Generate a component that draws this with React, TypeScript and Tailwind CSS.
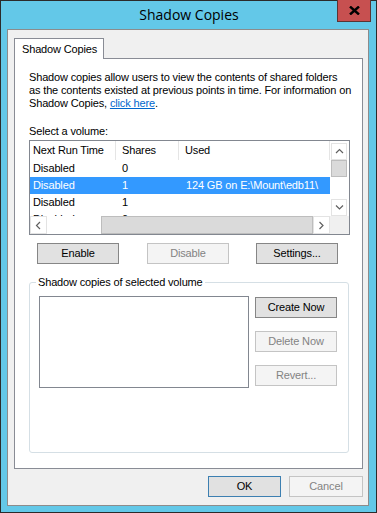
import React from "react";

const btnBase = "h-[21px] border flex items-center justify-center leading-none text-[11px]";
const btnNormal = `${btnBase} bg-[#e1e1e1] border-[#868686] text-black`;
const btnDisabled = `${btnBase} bg-[#f4f4f4] border-[#c4c4c4] text-[#838383]`;

const rows = [
  { time: "Disabled", shares: "0", used: "" },
  { time: "Disabled", shares: "1", used: "124 GB on E:\\Mount\\edb11\\", selected: true },
  { time: "Disabled", shares: "1", used: "" },
  { time: "Disabled", shares: "0", used: "" },
];

const Chevron = ({ dir }: { dir: "up" | "down" | "left" | "right" }) => {
  const pts = {
    up: "1,5 4.5,1.5 8,5",
    down: "1,1.5 4.5,5 8,1.5",
    left: "5,1 1.5,4.5 5,8",
    right: "1.5,1 5,4.5 1.5,8",
  }[dir];
  const vertical = dir === "up" || dir === "down";
  return (
    <svg width={vertical ? 9 : 7} height={vertical ? 7 : 9} viewBox={vertical ? "0 0 9 7" : "0 0 7 9"}>
      <polyline points={pts} fill="none" stroke="#606060" strokeWidth="1.2" />
    </svg>
  );
};

const VolumeList = () => (
  <div className="mt-[2px] w-[321px] h-[95px] border border-[#828790] bg-white flex flex-col">
    <div className="flex h-[75px]">
      <div className="w-[300px] overflow-hidden">
        <div className="flex h-[19px] items-center">
          <div className="w-[86px] h-full pl-[3px] flex items-center border-r border-[#e5e5e5]">Next Run Time</div>
          <div className="w-[63px] h-full pl-[6px] flex items-center border-r border-[#e5e5e5]">Shares</div>
          <div className="flex-1 h-full pl-[6px] flex items-center border-r border-[#e5e5e5]">Used</div>
        </div>
        {rows.map((r, i) => (
          <div
            key={i}
            className={`flex h-[17px] items-center ${r.selected ? "bg-[#3399ff] text-white" : ""}`}
          >
            <div className="w-[86px] pl-[3px]">{r.time}</div>
            <div className="w-[63px] pl-[6px]">{r.shares}</div>
            <div className="flex-1 pl-[7px] whitespace-nowrap">{r.used}</div>
          </div>
        ))}
      </div>
      <div className="w-[19px] pt-[2px] pl-[1px] flex flex-col">
        <div className="w-[16px] h-[17px] border border-[#e3e3e3] flex items-center justify-center">
          <Chevron dir="up" />
        </div>
        <div className="w-[16px] h-[17px] bg-[#dadada] border border-[#bdbdbd]" />
        <div className="flex-1" />
        <div className="w-[16px] h-[17px] border border-[#e3e3e3] flex items-center justify-center">
          <Chevron dir="down" />
        </div>
      </div>
    </div>
    <div className="flex h-[18px]">
      <div className="w-[300px] flex">
        <div className="w-[17px] h-full border border-[#e3e3e3] flex items-center justify-center">
          <Chevron dir="left" />
        </div>
        <div className="w-[54px]" />
        <div className="flex-1 bg-[#dadada] border border-[#bdbdbd]" />
        <div className="w-[17px] h-full border border-[#e3e3e3] flex items-center justify-center">
          <Chevron dir="right" />
        </div>
      </div>
      <div className="w-[19px] bg-[#f0f0f0]" />
    </div>
  </div>
);

export default function App() {
  return (
    <div className="relative w-[377px] h-[513px] border border-[#2b2b2b] bg-[#63c8e8] flex flex-col font-['Liberation_Sans',Arial,sans-serif] text-[11px] tracking-[-0.15px] text-black">
      {/* title bar */}
      <div className="h-[28px] flex items-center justify-center">
        <span className="font-['Open_Sans',sans-serif] text-[14px] tracking-normal leading-none pl-[1px] pb-[1px]">Shadow Copies</span>
      </div>
      <div className="absolute left-[336px] top-[-1px] w-[34px] h-[22px] bg-[#c75050] border border-t-0 border-[#5a3434] flex items-center justify-center">
        <svg width="11" height="9" viewBox="0 0 11 9">
          <path d="M1 0.5 L10 8.5 M10 0.5 L1 8.5" stroke="#000" strokeWidth="2.4" />
        </svg>
      </div>

      {/* client area */}
      <div className="ml-[6px] w-[362px] h-[477px] border border-[#8c8c8c] bg-[#f0f0f0] pt-[8px] pl-[6px] pr-[5px] flex flex-col">
        <div className="relative z-10 -mb-[1px] w-[90px] h-[21px] bg-white border border-b-0 border-[#898c95] pl-[7px] flex items-center">
          Shadow Copies
        </div>
        <div className="w-[349px] h-[411px] bg-white border border-[#898c95] pt-[12px] pl-[14px] pr-[12px] leading-[13px]">
          <p className="whitespace-nowrap">
            Shadow copies allow users to view the contents of shared folders
            <br />
            as the contents existed at previous points in time. For information on
            <br />
            Shadow Copies, <span className="text-[#0066cc] underline">click here</span>.
          </p>
          <p className="mt-[15px]">Select a volume:</p>
          <VolumeList />

          <div className="mt-[8px] pl-[8px] flex">
            <div className={`${btnNormal} w-[82px]`}>Enable</div>
            <div className={`${btnDisabled} w-[82px] ml-[28px]`}>Disable</div>
            <div className={`${btnNormal} w-[82px] ml-[27px]`}>Settings...</div>
          </div>

          <fieldset className="mt-[12px] w-[320px] h-[177px] border border-[#d5dfe5] rounded-[3px]">
            <legend className="ml-[6px] px-[2px] leading-[13px]">Shadow copies of selected volume</legend>
            <div className="mt-[7px] pl-[9px] flex">
              <div className="w-[210px] h-[92px] border border-[#828790] bg-white" />
              <div className="ml-[6px] mt-[1px] flex flex-col gap-[13px]">
                <div className={`${btnNormal} w-[82px]`}>Create Now</div>
                <div className={`${btnDisabled} w-[82px]`}>Delete Now</div>
                <div className={`${btnDisabled} w-[82px]`}>Revert...</div>
              </div>
            </div>
          </fieldset>
        </div>

        <div className="mt-[7px] flex justify-end gap-[8px] w-[349px]">
          <div className={`${btnBase} w-[73px] bg-[#e1e1e1] border-[#3c7fb1] text-black`}>OK</div>
          <div className={`${btnDisabled} w-[74px]`}>Cancel</div>
        </div>
      </div>
    </div>
  );
}
